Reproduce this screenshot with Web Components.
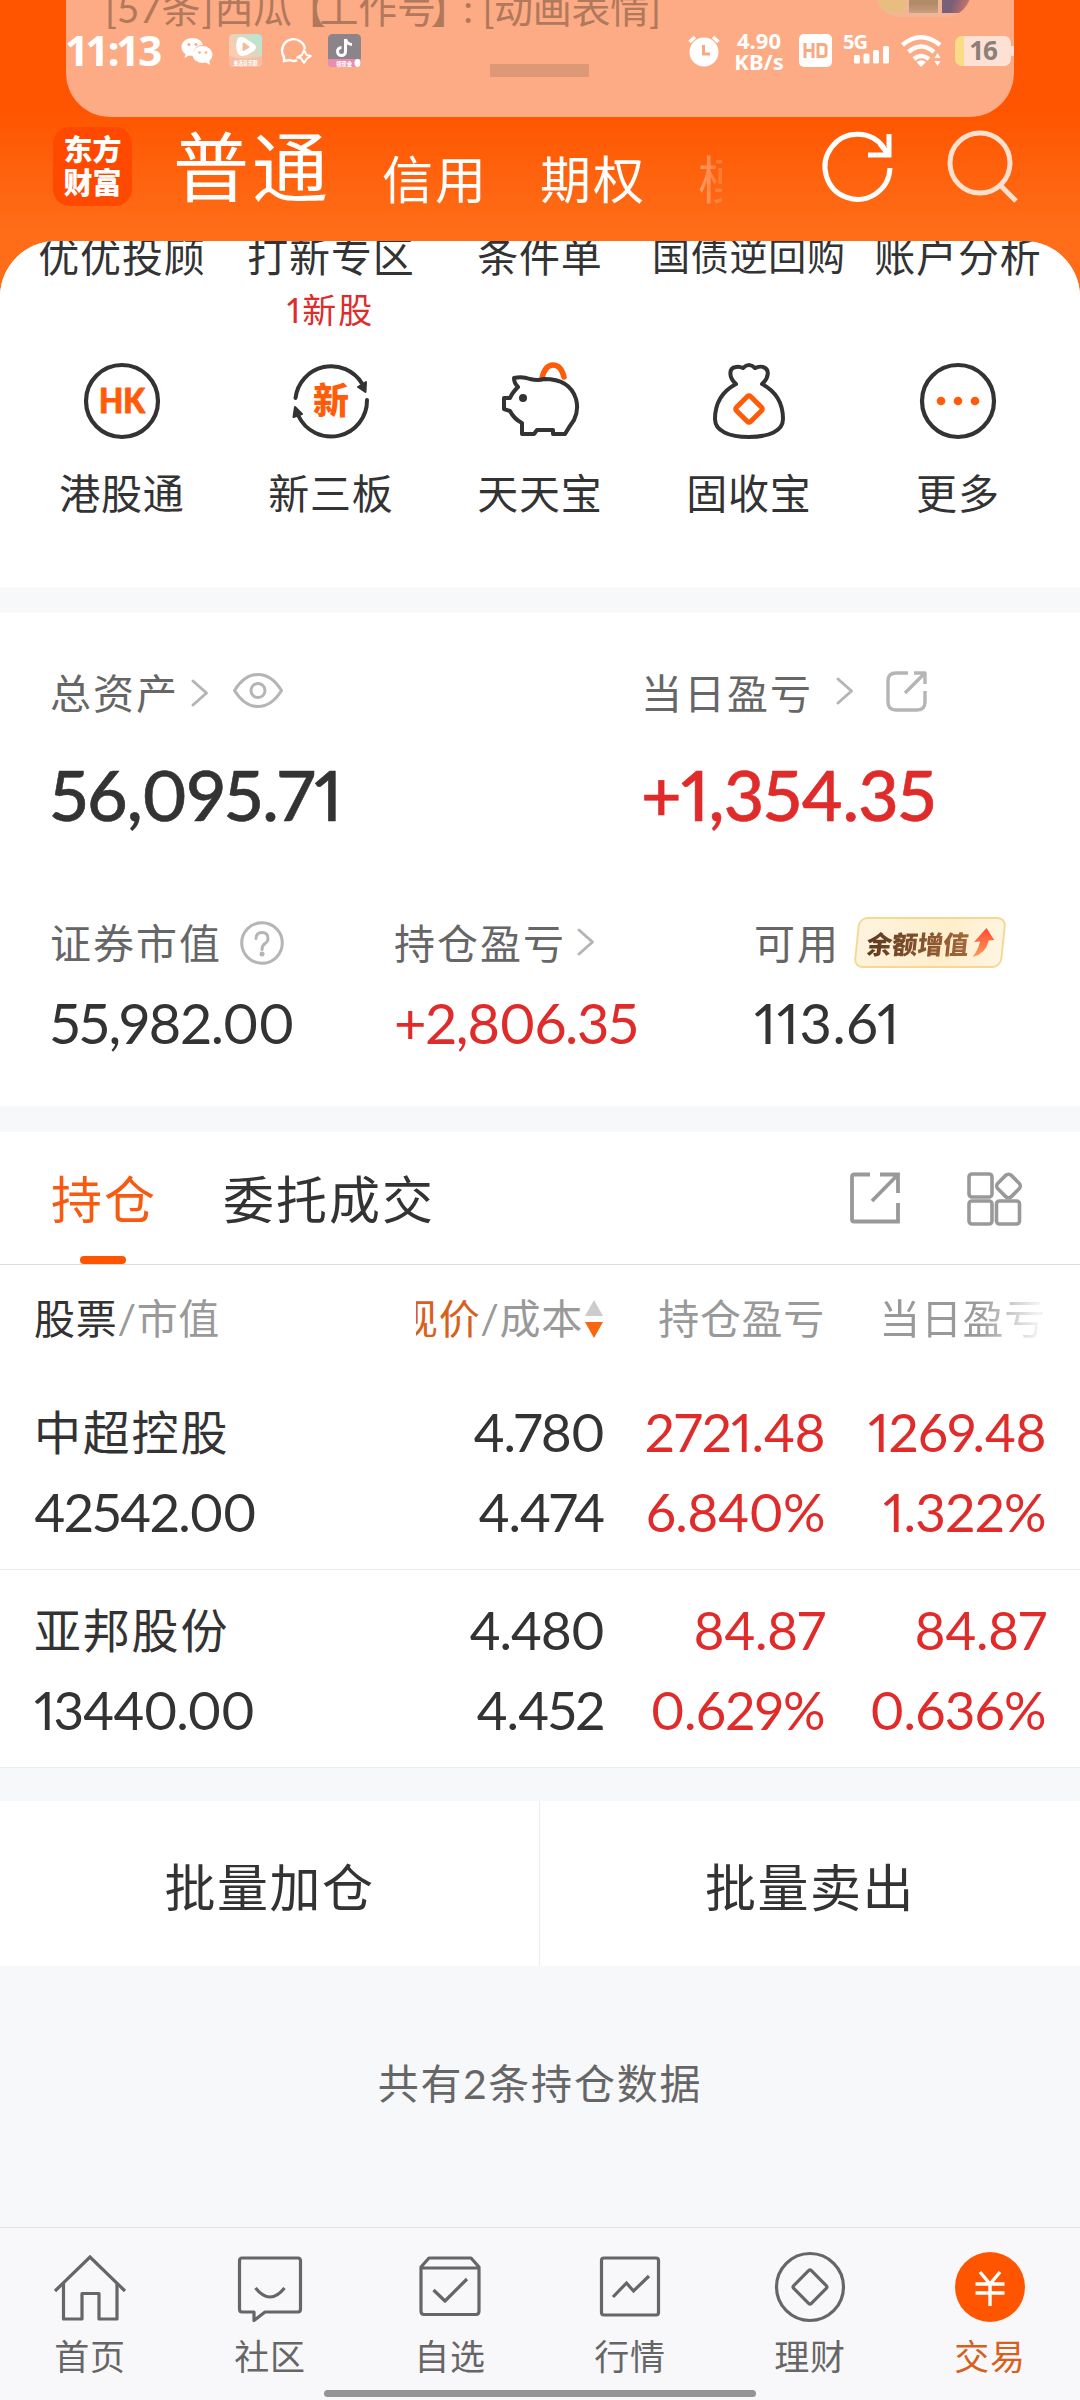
<!DOCTYPE html>
<html lang="zh-CN">
<head>
<meta charset="utf-8">
<title>东方财富 - 交易</title>
<style>
    * { box-sizing: border-box; }
    body {
        margin: 0;
        width: 1080px;
        height: 2400px;
        overflow: hidden;
        background: #f7f8fa;
        color: #333;
        font-family: Lato, "Noto Sans CJK SC", sans-serif;
        font-variant-numeric: proportional-nums;
    }
    trade-app { --orange: #ff5500; --red: #e02b2b; --muted: #666; }
</style>
</head>
<body>
<trade-app>
    <status-bar slot="top"></status-bar>
    <account-header slot="top"></account-header>

    <quick-grid>
        <quick-entry label="优优投顾"></quick-entry>
        <quick-entry label="打新专区" note="1新股"></quick-entry>
        <quick-entry label="条件单"></quick-entry>
        <quick-entry label="国债逆回购" small></quick-entry>
        <quick-entry label="账户分析"></quick-entry>
        <quick-entry label="港股通" icon="hk"></quick-entry>
        <quick-entry label="新三板" icon="xin"></quick-entry>
        <quick-entry label="天天宝" icon="pig"></quick-entry>
        <quick-entry label="固收宝" icon="bag"></quick-entry>
        <quick-entry label="更多" icon="more"></quick-entry>
    </quick-grid>

    <asset-panel>
        <asset-item slot="main" label="总资产" value="56,095.71" big>
            <app-icon name="chevron" style="margin:3px 0 0 12px"></app-icon>
            <app-icon name="eye" style="margin:-1px 0 0 24px"></app-icon>
        </asset-item>
        <asset-item slot="main" label="当日盈亏" value="+1,354.35" big up>
            <app-icon name="chevron" style="margin-left:23px"></app-icon>
            <app-icon name="share-round" style="margin:1px 0 0 32px"></app-icon>
        </asset-item>
        <asset-item slot="sub" label="证券市值" value="55,982.00">
            <app-icon name="help" style="margin:3px 0 0 18px"></app-icon>
        </asset-item>
        <asset-item slot="sub" label="持仓盈亏" value="+2,806.35" up>
            <app-icon name="chevron" style="margin:2px 0 0 11px"></app-icon>
        </asset-item>
        <asset-item slot="sub" label="可用" value="113.61" style="--track:.6px">
            <gain-badge>余额增值</gain-badge>
        </asset-item>
    </asset-panel>

    <position-tabs></position-tabs>
    <position-table></position-table>

    <batch-actions>
        <span>批量加仓</span>
        <span>批量卖出</span>
    </batch-actions>
    <list-footer>共有2条持仓数据</list-footer>

    <tab-bar slot="bottom">
        <tab-item icon="home">首页</tab-item>
        <tab-item icon="chat">社区</tab-item>
        <tab-item icon="box">自选</tab-item>
        <tab-item icon="chart">行情</tab-item>
        <tab-item icon="coin">理财</tab-item>
        <tab-item icon="yen" active>交易</tab-item>
    </tab-bar>
</trade-app>

<script>
const BASE = '* { box-sizing: border-box; } :host { display: block; white-space: nowrap; }';

class BaseElement extends HTMLElement {
    constructor() {
        super();
        this.attachShadow({ mode: 'open' });
    }

    connectedCallback() {
        this.shadowRoot.innerHTML = `<style>${BASE}${this.styles()}</style>${this.render()}`;
    }

    styles() { return ''; }
    render() { return '<slot></slot>'; }
}

// name: [width, height, markup]
const ICONS = {
    chevron: [18, 28, '<path d="M2 2 15.500 14 2 26" fill="none" stroke="#b5b5b5" stroke-width="3" stroke-linecap="round" stroke-linejoin="round"/>'],
    eye: [50, 35, '<g fill="none" stroke="#b5b5b5" stroke-width="3"><path d="M1.500 17.500C8 7 16 1.500 25 1.500S42 7 48.500 17.500C42 28 34 33.500 25 33.500S8 28 1.500 17.500Z" stroke-linejoin="round"/><circle cx="25" cy="17.500" r="7"/></g>'],
    'share-round': [41, 41, '<g fill="none" stroke="#b5b5b5" stroke-width="3.400"><path d="M22 2H10Q2 2 2 10V31Q2 39 10 39H31Q39 39 39 31V20"/><path d="M28 2H39V13M39 2 19 22" stroke-linejoin="round"/></g>'],
    help: [44, 44, '<g fill="none" stroke="#b5b5b5" stroke-width="3"><circle cx="22" cy="22" r="20.300"/><path d="M16 17.500Q16 11.500 22 11.500T28 17.500Q28 20.500 25 22.500T22 28.500" stroke-linecap="round"/></g><circle cx="22" cy="33" r="2.500" fill="#b5b5b5"/>'],
    share: [50, 52, '<g fill="none" stroke="#999" stroke-width="3.800"><path d="M20 2.500H4Q2 2.500 2 4.500V47.500Q2 49.500 4 49.500H48V31"/><path d="M30 2.500H48V21M48 2.500 22 29"/></g>'],
    grid: [55, 54, '<g fill="none" stroke="#999" stroke-width="3.600"><rect x="2" y="2" width="23" height="23" rx="3"/><rect x="2" y="29" width="23" height="23" rx="3"/><rect x="29.500" y="29" width="23" height="23" rx="3"/><rect x="32" y="4.500" width="19" height="19" rx="4" transform="rotate(45 41.500 14)"/></g>'],
    refresh: [70, 72, '<g fill="none" stroke="#fff" stroke-width="5"><path d="M61 17A32.500 32.500 0 1 0 67 37"/><path d="M66 3V24H45M65 23 57 13"/></g>'],
    search: [72, 74, '<g fill="none" stroke="#ffe0cd" stroke-width="5"><circle cx="33" cy="34" r="30"/><path d="M53 56 69 72"/></g>'],
    hk: [80, 80, '<circle cx="40" cy="40" r="36" fill="none" stroke="#333" stroke-width="4.200"/><text x="17" y="52" font-size="34" font-weight="900" fill="#ff5c0a" stroke="#ff5c0a" stroke-width="1" stroke-linejoin="round" textLength="46" lengthAdjust="spacingAndGlyphs">HK</text>'],
    xin: [80, 80, '<g fill="none" stroke="#333" stroke-width="4" stroke-linecap="round"><path d="M4.500 37A36 36 0 0 1 71 22.500"/><path d="M76 39A36 36 0 0 1 7.500 55"/></g><path d="M67 26 75 21 74.500 31ZM2.500 56 4 46 11 53Z" fill="#333" stroke="#333" stroke-width="2" stroke-linejoin="round"/><text x="40" y="53" text-anchor="middle" font-size="36" font-weight="900" fill="#ff5c0a">新</text>'],
    pig: [80, 80, '<g fill="none" stroke-width="4" stroke-linejoin="round"><path d="M42 17Q45 4 53 4T64 16" stroke="#ff5c0a" stroke-width="5.500" stroke-linecap="round"/><path d="M44 18Q38 20 30 18Q22 15 14 17Q14 22 18 26Q12 32 10 37H4V48L10 50Q14 58 22 62V73H34L37 69H53V73H65Q69 66 74 59Q79 49 76 38Q70 18 44 18Z" stroke="#333"/></g><circle cx="23" cy="37" r="4" fill="#333"/>'],
    bag: [80, 80, '<g fill="none" stroke-width="4" stroke-linejoin="round"><path d="M27 23C20 17 19 7 27 6Q30 5 34 7Q40 1 46 7Q52 5 54 6C61 8 60 17 53 23C68 31 74 43 74 58C74 70 60 76 40 76S6 70 6 58C6 43 12 31 27 23Z" stroke="#333"/><rect x="30" y="38" width="20" height="20" rx="2" stroke="#ff5c0a" stroke-width="5" transform="rotate(45 40 48)"/></g>'],
    more: [80, 80, '<circle cx="40" cy="40" r="36" fill="none" stroke="#333" stroke-width="4.200"/><g fill="#ff5c0a"><circle cx="23" cy="40" r="4.300"/><circle cx="40" cy="40" r="4.300"/><circle cx="57" cy="40" r="4.300"/></g>'],
    home: [80, 72, '<g fill="none" stroke="#666" stroke-width="3.200"><path d="M5 37 40 3 75 37"/><path d="M13.500 29V65H32V39.500H49V65H67V29" stroke-linejoin="round"/></g>'],
    chat: [80, 72, '<g fill="none" stroke="#666" stroke-width="3.200" stroke-linejoin="round"><path d="M12 4H68Q70.500 4 70.500 7V55Q70.500 58 68 58H35L24 66.500V58H12Q9.500 58 9.500 55V7Q9.500 4 12 4Z"/><path d="M25.500 34Q40 52 54.500 34"/></g>'],
    box: [80, 72, '<g fill="none" stroke="#666" stroke-width="3.200" stroke-linejoin="round"><path d="M11 13 19 4H61L69 13V57Q69 60.500 66 60.500H14Q11 60.500 11 57ZM11 14H69"/><path d="M23.500 36 35 47 57 25"/></g>'],
    chart: [80, 72, '<g fill="none" stroke="#666" stroke-width="3.200"><rect x="11.500" y="4" width="57" height="57" rx="2.500"/><path d="M23 43 36.500 29 43.500 37 59 22"/></g>'],
    coin: [80, 72, '<g fill="none" stroke="#666" stroke-width="3.200"><circle cx="40" cy="33" r="33.500"/><rect x="27.500" y="20.500" width="25" height="25" rx="2" transform="rotate(45 40 33)"/></g>'],
    yen: [80, 72, '<circle cx="40" cy="33" r="35" fill="#ff5500"/><path d="M30 18 40 30 50 18M25.500 30H54.500M25.500 39H54.500M40 29V52" fill="none" stroke="#fff" stroke-width="3.400"/>'],
    wechat: [32, 28, '<g fill="#fff"><path d="M11.500 1C5 1 .5 5 .5 10 .5 13 2 15.500 4.500 17L3.500 21 8 18.500 12 19C11 12 16 8 22 8 21 4 17 1 11.500 1Z"/><ellipse cx="21.500" cy="17.500" rx="10" ry="8.500"/><path d="M24 25 29 28 28 22Z"/></g><g fill="#fdab84"><circle cx="8" cy="7.500" r="1.500"/><circle cx="15" cy="7.500" r="1.500"/><circle cx="18.500" cy="15.500" r="1.300"/><circle cx="25" cy="15.500" r="1.300"/></g>'],
    video: [33, 33, '<defs><linearGradient id="g" x1="0" y1="1" x2="1" y2="0"><stop offset=".4" stop-color="#f8cdb0"/><stop offset="1" stop-color="#a5ecdc"/></linearGradient></defs><rect width="33" height="33" rx="4.500" fill="url(#g)"/><path d="M0 22Q16 27 33 22V29Q33 33 29 33H4Q0 33 0 29Z" fill="#f5bda3"/><path d="M9 4Q12 2 16 4L25 10Q29 13 25 17L18 21Q9 24 8 17Q6 10 9 4Z" fill="#fff"/><path d="M14.500 9.500 19.500 13 14.500 16Z" fill="#f3bd9d" stroke="#f3bd9d" stroke-width="2" stroke-linejoin="round"/><text x="4.500" y="31" textLength="24" lengthAdjust="spacingAndGlyphs" font-size="6" font-weight="700" fill="#fff">金选音乐剧</text>'],
    bubble: [33, 27, '<path d="M26 12A11.500 11.500 0 1 0 5 20L5 24 11 23Q15 25 18 23" fill="none" stroke="#fff" stroke-width="2.400"/><path d="M25 13 27.500 18 32 19 28 21.500 25 26 22 21 18 20.500 23 18Z" fill="none" stroke="#fff" stroke-width="2" stroke-linejoin="round"/>'],
    note: [33, 33, '<rect width="33" height="33" rx="4.500" fill="#8b858b"/><path d="M0 25H33V29Q33 33 29 33H4Q0 33 0 29Z" fill="#e58fb2"/><path d="M17.500 5V17.500A4 4 0 1 1 13.500 13.500M17.500 5Q18.500 10 24 10.500" fill="none" stroke="#fff" stroke-width="3"/><text x="8" y="31.500" textLength="16" lengthAdjust="spacingAndGlyphs" font-size="6" font-weight="700" fill="#fff">领现金</text><ellipse cx="29.500" cy="29" rx="3" ry="4" fill="#fff"/>'],
    alarm: [32, 32, '<circle cx="16" cy="17" r="14.500" fill="#fff"/><path d="M1.500 7 7 2M30.500 7 25 2" stroke="#fff" stroke-width="3.500"/><path d="M15.500 10V19H22" fill="none" stroke="#f8a982" stroke-width="3"/>'],
    hd: [33, 33, '<rect width="33" height="33" rx="5" fill="#fff"/><path d="M6 9V24M14 9V24M6 16.500H14M19 10.500H24Q27 10.500 27 13V20Q27 22.500 24 22.500H19Z" fill="none" stroke="#f8a982" stroke-width="3"/>'],
    signal: [36, 18, '<g fill="#fff"><rect y="9" width="6" height="8.500" rx="1.500"/><rect x="9.500" y="7.500" width="6" height="10" rx="1.500"/><rect x="19" y="4" width="6" height="13.500" rx="1.500"/><rect x="29" y="0" width="6" height="17.500" rx="1.500"/></g>'],
    wifi: [42, 32, '<g fill="none" stroke="#fff" stroke-width="4.500"><path d="M1.500 10Q20 -5.500 39 10"/><path d="M7.500 17Q20 6 33 17"/><path d="M13 24Q20 18 28 24"/></g><path d="M15.500 27Q20 23.500 25 27L20 32ZM33.500 23 36.500 18 39.500 23ZM33.500 26 36.500 31 39.500 26Z" fill="#fff"/>'],
    rise: [22, 29, '<defs><linearGradient id="r" x1="0" y1="1" x2="0" y2="0"><stop offset="0" stop-color="#ff9a5c"/><stop offset="1" stop-color="#ff4a2f"/></linearGradient></defs><path d="M12 0 21 12 15.500 12.500Q14 26 1 29 6 22 7 13.500L1 14Z" fill="url(#r)"/>']
};

class AppIcon extends BaseElement {
    styles() {
        return ':host { flex: none; line-height: 0; } svg { display: block; overflow: visible; font-family: inherit; letter-spacing: 0; }';
    }

    render() {
        const [w, h, body] = ICONS[this.getAttribute('name')];
        return `<svg width="${w}" height="${h}" viewBox="0 0 ${w} ${h}">${body}</svg>`;
    }
}

class TradeApp extends BaseElement {
    styles() {
        return `
            :host { display: flex; flex-direction: column; width: 1080px; height: 2400px; position: relative; }
            .top { height: 300px; margin-bottom: -59px; background: linear-gradient(#ff5500 0, #ff5500 110px, #ff6d18 230px); }
            main { flex: 1; min-height: 0; position: relative; overflow: hidden; border-radius: 56px 56px 0 0; background: #f7f8fa; }
        `;
    }

    render() {
        return '<div class="top"><slot name="top"></slot></div><main><slot></slot></main><slot name="bottom"></slot>';
    }
}

// System status icons with the heads-up notification sliding away behind them
class StatusBar extends BaseElement {
    styles() {
        return `
            :host { height: 117px; position: relative; }
            .toast {
                position: absolute; left: 66px; top: 0; width: 948px; height: 117px; overflow: hidden;
                border-radius: 0 0 44px 44px; background: #fdab84;
            }
            .msg { position: absolute; left: 39px; top: -16px; font-size: 39px; line-height: 48px; color: #b0795d; letter-spacing: -.3px; }
            .msg i { font-style: normal; margin: 0 -6px 0 -5px; }
            .msg u { text-decoration: none; letter-spacing: 1px; }
            .handle { position: absolute; left: 424px; top: 64px; width: 99px; height: 13px; background: #dd9975; }
            .thumb {
                position: absolute; left: 809px; top: -79px; width: 96px; height: 96px; padding: 0 1px 4px 2px; gap: 4px;
                border-radius: 26px; overflow: hidden; background: #f3b598; display: grid; grid-template-columns: repeat(3, 1fr);
            }
            .thumb i:nth-child(1) { background: #e9bd80; }
            .thumb i:nth-child(2) { background: linear-gradient(#b18a68 90%, #c9a183); }
            .thumb i:nth-child(3) { background: linear-gradient(110deg, #7a5f78 65%, #dc7d62); }
            .row { position: absolute; inset: 0; padding: 0 66px 16px 67px; display: flex; align-items: center; color: #fff; font-weight: 700; }
            .time { font-size: 42px; width: 114px; letter-spacing: -1.400px; font-family: "Noto Sans", sans-serif; margin-top: -2px; }
            .speed { font: 700 22px/21px "Noto Sans", sans-serif; text-align: center; width: 56px; margin: 0 12px 0 11px; }
            .speed span { display: block; }
            .cell { width: 47px; margin: -3px 11px 0 11px; }
            .cell b { display: block; font: 700 20px/16px "Noto Sans", sans-serif; height: 12px; letter-spacing: -1px; }
            .cell app-icon { margin-left: 11px; }
            .battery {
                width: 56px; height: 30px; border-radius: 7px; margin-left: 12px; color: #8a8078;
                background: linear-gradient(90deg, #fbdc86 9px, #fde1d4 9px);
                font: 700 26px/29px "Noto Sans", sans-serif; text-align: center; letter-spacing: -1px;
            }
            .tip { width: 3px; height: 10px; background: #fde1d4; }
        `;
    }

    render() {
        return `
            <div class="toast">
                <div class="msg"><u>[57条]</u>西瓜<i>【</i>工作号<i>】</i>: [动画表情]</div>
                <div class="thumb"><i></i><i></i><i></i></div>
                <div class="handle"></div>
            </div>
            <div class="row">
                <span class="time">11:13</span>
                <app-icon name="wechat"></app-icon>
                <app-icon name="video" style="margin-left:16px"></app-icon>
                <app-icon name="bubble" style="margin-left:17px"></app-icon>
                <app-icon name="note" style="margin-left:16px"></app-icon>
                <app-icon name="alarm" style="margin-left:auto"></app-icon>
                <span class="speed"><span>4.90</span><span>KB/s</span></span>
                <app-icon name="hd"></app-icon>
                <div class="cell"><b>5G</b><app-icon name="signal"></app-icon></div>
                <app-icon name="wifi"></app-icon>
                <span class="battery">16</span><span class="tip"></span>
            </div>
        `;
    }
}

class AccountHeader extends BaseElement {
    styles() {
        return `
            :host { display: flex; height: 123px; padding: 0 60px 0 53px; color: #fff; }
            .logo {
                flex: none; width: 79px; height: 79px; margin-top: 10px; padding-top: 7px; border-radius: 17px; background: #ff4800;
                font-size: 29px; line-height: 32.500px; font-weight: 900; text-align: center;
            }
            .accounts { display: flex; width: 594px; padding-left: 41px; overflow: hidden; font-size: 51px; letter-spacing: 2px; line-height: 60px; }
            .accounts span { margin: 33px 52px 0 0; }
            .accounts .on { font-size: 76px; letter-spacing: 3px; line-height: 90px; margin: 5px 51px 0 0; }
            .accounts .next { color: #ffa06b; margin: 33px 0 0 0; width: 24px; overflow: hidden; flex: none; height: 60px;
                -webkit-mask-image: linear-gradient(90deg, #000, #0006); }
            app-icon { margin-top: 14px; }
        `;
    }

    render() {
        return `
            <div class="logo">东方<br>财富</div>
            <div class="accounts">
                <span class="on">普通</span><span>信用</span><span>期权</span><span class="next">模</span>
            </div>
            <app-icon name="refresh" style="margin-left:97px"></app-icon>
            <app-icon name="search" style="margin:12px 0 0 54px"></app-icon>
        `;
    }
}

class QuickGrid extends BaseElement {
    styles() {
        return `
            :host {
                display: grid; grid-template-columns: repeat(5, 1fr); grid-template-rows: 120px 226px;
                height: 346px; padding: 0 18px 0 17px; background: #fff;
            }
        `;
    }
}

class QuickEntry extends BaseElement {
    styles() {
        return `
            :host { display: flex; flex-direction: column; align-items: center; }
            app-icon { margin-bottom: 28px; }
            .label { font-size: 41px; line-height: 50px; letter-spacing: .8px; margin-right: -.8px; }
            .label.first { margin-top: -9px; }
            :host([small]) .label { font-size: 38px; margin-top: -11px; }
            .note { font-size: 34px; line-height: 44px; margin-top: 6px; color: var(--red); letter-spacing: 2px; }
        `;
    }

    render() {
        const icon = this.getAttribute('icon');
        const note = this.getAttribute('note');
        return `
            ${icon ? `<app-icon name="${icon}"></app-icon>` : ''}
            <div class="label ${icon ? '' : 'first'}">${this.getAttribute('label')}</div>
            ${note ? `<div class="note">${note}</div>` : ''}
        `;
    }
}

class AssetPanel extends BaseElement {
    styles() {
        return `
            :host { height: 493px; margin: 26px 0; padding: 50px 50px 0; background: #fff; }
            .main { display: grid; grid-template-columns: 591px 1fr; height: 250px; }
            .sub { display: grid; grid-template-columns: 344px 360px 1fr; }
        `;
    }

    render() {
        return '<div class="main"><slot name="main"></slot></div><div class="sub"><slot name="sub"></slot></div>';
    }
}

class AssetItem extends BaseElement {
    styles() {
        return `
            .label { display: flex; align-items: center; height: 56px; font-size: 41px; letter-spacing: 2px; color: var(--muted); }
            .value { font-size: 56px; line-height: 60px; margin-top: 24px; letter-spacing: var(--track, -1.2px); }
            :host([big]) .value { font-size: 70px; line-height: 80px; font-weight: 500; margin-top: 35px; letter-spacing: -.6px; -webkit-text-stroke: .6px; }
            :host([up]) .value { color: var(--red); }
        `;
    }

    render() {
        return `
            <div class="label">${this.getAttribute('label')}<slot></slot></div>
            <div class="value">${this.getAttribute('value')}</div>
        `;
    }
}

class GainBadge extends BaseElement {
    styles() {
        return `
            :host {
                display: flex; align-items: center; width: 148px; height: 51px; margin: 2px 0 0 16px; padding-left: 9px;
                border: 2.500px solid #f6d894; border-radius: 9px; background: linear-gradient(100deg, #fdf3df, #ffeecb 60%, #fff5e2);
                transform: skewX(-6deg); font-size: 25.500px; font-weight: 900; letter-spacing: 0;
            }
            span { background: linear-gradient(90deg, #5e3a20, #a5683a); -webkit-background-clip: text; color: transparent; }
            app-icon { margin-left: 4px; }
        `;
    }

    render() {
        return '<span><slot></slot></span><app-icon name="rise"></app-icon>';
    }
}

class PositionTabs extends BaseElement {
    styles() {
        return `
            :host { display: flex; height: 133px; padding: 0 58px 0 51px; background: #fff; border-bottom: 1px solid #dcdcdc; font-size: 51px; letter-spacing: 2px; }
            .tab { display: flex; flex-direction: column; align-items: center; margin-right: 66px; line-height: 60px; padding-top: 38px; }
            .tab.on { color: #f75a10; }
            .tab.on::after { content: ""; width: 46px; height: 8px; border-radius: 4px; margin: 26px 2px 0 0; background: var(--orange); }
            app-icon { margin-top: 40px; }
        `;
    }

    render() {
        return `
            <div class="tab on">持仓</div>
            <div class="tab">委托成交</div>
            <app-icon name="share" style="margin-left:auto"></app-icon>
            <app-icon name="grid" style="margin-left:67px"></app-icon>
        `;
    }
}

class PositionTable extends BaseElement {
    styles() {
        return `
            :host { background: #fff; }
            .line { display: grid; grid-template-columns: 1fr 220px 221px 221px; padding: 0 34px; }
            .line > * { text-align: right; }
            .line > :first-child { text-align: left; }
            .head { height: 107px; line-height: 50px; padding-top: 29px; font-size: 41px; letter-spacing: .7px; color: #999; }
            .head b { font-weight: 400; color: #333; }
            .price { display: flex; justify-content: flex-end; overflow: hidden; width: 188px; margin-left: 32px; }
            .price em { font-style: normal; color: #d9601c; }
            .price svg { flex: none; margin: 6px 1px 0 2px; }
            .fade { background: linear-gradient(90deg, #999 60%, #f2f2f2 95%); -webkit-background-clip: text; color: transparent; margin-left: 50px; }
            .row { height: 198px; padding-top: 20px; border-bottom: 1px solid #ececec; font-size: 53px; line-height: 80px; letter-spacing: -1.400px; }
            .row .name { font-size: 47px; letter-spacing: 1.800px; }
            .row .up { color: var(--red); letter-spacing: -.6px; }
        `;
    }

    render() {
        const rows = [
            ['中超控股', '42542.00', '4.780', '4.474', '2721.48', '6.840%', '1269.48', '1.322%'],
            ['亚邦股份', '13440.00', '4.480', '4.452', '84.87', '0.629%', '84.87', '0.636%']
        ];
        return `
            <div class="line head">
                <div><b>股票</b>/市值</div>
                <div class="price"><em>现价</em>/成本<svg width="18" height="39"><path d="M9 0 18 16H0Z" fill="#ccc"/><path d="M0 22H18L9 38Z" fill="#f9660f"/></svg></div>
                <div>持仓盈亏</div>
                <div class="fade">当日盈亏</div>
            </div>
            ${rows.map(r => `
                <div class="line row">
                    <div><div class="name">${r[0]}</div><div>${r[1]}</div></div>
                    <div>${r[2]}<br>${r[3]}</div>
                    <div class="up">${r[4]}<br>${r[5]}</div>
                    <div class="up">${r[6]}<br>${r[7]}</div>
                </div>
            `).join('')}
        `;
    }
}

class BatchActions extends BaseElement {
    styles() {
        return `
            :host { display: flex; height: 165px; margin-top: 33px; background: #fff; font-size: 51px; letter-spacing: 1.500px; }
            ::slotted(span) { flex: 0 0 540px; box-sizing: border-box; display: flex; align-items: center; justify-content: center; padding-top: 2px; }
            ::slotted(span:first-child) { border-right: 1px solid #ececec; }
        `;
    }
}

class ListFooter extends BaseElement {
    styles() {
        return ':host { padding-top: 93px; text-align: center; font-size: 41px; line-height: 50px; letter-spacing: 1.800px; color: var(--muted); }';
    }
}

class TabBar extends BaseElement {
    styles() {
        return `
            :host { height: 173px; position: relative; border-top: 1px solid #e2e2e4; background: #f8f8fa; }
            nav { display: grid; grid-template-columns: repeat(6, 1fr); }
            .home-bar { position: absolute; left: 324px; bottom: 3px; width: 432px; height: 7px; border-radius: 4px; background: #949494; }
        `;
    }

    render() {
        return '<nav><slot></slot></nav><div class="home-bar"></div>';
    }
}

class TabItem extends BaseElement {
    styles() {
        return `
            :host { display: flex; flex-direction: column; align-items: center; padding-top: 26px; color: #666; font-size: 35px; line-height: 40px; letter-spacing: .8px; }
            :host([active]) { color: #d9601c; }
            app-icon { margin-bottom: 10px; }
        `;
    }

    render() {
        return `<app-icon name="${this.getAttribute('icon')}"></app-icon><span><slot></slot></span>`;
    }
}

customElements.define('app-icon', AppIcon);
customElements.define('trade-app', TradeApp);
customElements.define('status-bar', StatusBar);
customElements.define('account-header', AccountHeader);
customElements.define('quick-grid', QuickGrid);
customElements.define('quick-entry', QuickEntry);
customElements.define('asset-panel', AssetPanel);
customElements.define('asset-item', AssetItem);
customElements.define('gain-badge', GainBadge);
customElements.define('position-tabs', PositionTabs);
customElements.define('position-table', PositionTable);
customElements.define('batch-actions', BatchActions);
customElements.define('list-footer', ListFooter);
customElements.define('tab-bar', TabBar);
customElements.define('tab-item', TabItem);
</script>
</body>
</html>
